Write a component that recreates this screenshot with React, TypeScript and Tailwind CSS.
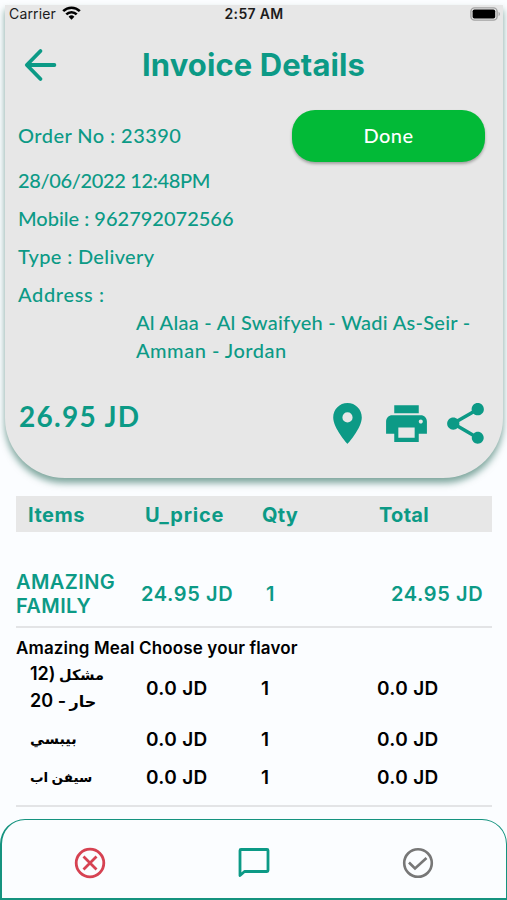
import React from "react";
import { MdLocationOn, MdPrint, MdShare } from "react-icons/md";

type OrderOption = {
    name: React.ReactNode;
    price: string;
    qty: number;
    total: string;
    rowClass: string;
};

const options: OrderOption[] = [
    {
        name: (
            <>
                <span className="text-[14.5px]">مشكل</span> <span className="text-[18px] tracking-[0.4px]">(12</span>
                <br />
                <span className="text-[16px]">حار</span> <span className="text-[18px] tracking-[0.6px]">- 20</span>
            </>
        ),
        price: "0.0 JD",
        qty: 1,
        total: "0.0 JD",
        rowClass: "h-[65px] pt-[2px]",
    },
    { name: <span className="text-[14.5px]">بيبسي</span>, price: "0.0 JD", qty: 1, total: "0.0 JD", rowClass: "h-[38px]" },
    { name: "سيفن اب", price: "0.0 JD", qty: 1, total: "0.0 JD", rowClass: "h-[38px]" },
];

const StatusBar: React.FC = () => (
    <div className="flex h-[18px] items-center pl-[4px] pr-[2px] text-[14px] text-[#1c1c1c]">
        <div className="flex w-[188px] items-center gap-[6px]">
            <span className="-mt-[1px] tracking-[0.15px]">Carrier</span>
            <svg className="-mt-[2px]" width="19" height="14" viewBox="0 0 19 14" fill="none" stroke="#000" strokeWidth="2.6">
                <path d="M1.2 5.1a11.8 11.8 0 0 1 16.6 0" />
                <path d="M4.3 8.4a7.3 7.3 0 0 1 10.4 0" />
                <path d="M9.5 13.8 6.6 10.8a4.1 4.1 0 0 1 5.8 0Z" fill="#000" stroke="none" />
            </svg>
        </div>
        <span className="-mt-[1px] flex-1 text-center font-semibold tracking-[0.3px]">2:57 AM</span>
        <div className="flex w-[190px] justify-end">
            <svg className="-mt-[1px]" width="31" height="14" viewBox="0 0 31 14">
                <rect x="0.9" y="0.9" width="26.2" height="12.2" rx="3.6" fill="none" stroke="#a3a3a3" strokeWidth="1.4" />
                <rect x="2.6" y="2.4" width="22.6" height="9.2" rx="1.8" fill="#000" />
                <path d="M28.6 4.8v4.4c1.8-.8 1.8-3.6 0-4.4Z" fill="#a3a3a3" />
            </svg>
        </div>
    </div>
);

const InvoiceCard: React.FC = () => (
    <section className="ml-[5px] mr-[4px] h-[473px] rounded-b-[60px] bg-[#e7e7e7] text-[#0c9a86] shadow-[0_5px_7px_rgba(0,80,60,0.5)]">
        <StatusBar />
        <div className="flex h-[83px] items-center pl-[19px]">
            <svg width="33" height="34" viewBox="0 0 33 34" fill="none" stroke="currentColor" strokeWidth="3.8" strokeLinecap="round" strokeLinejoin="round">
                <path d="M16.5 3 2.8 17l13.7 14M3.4 17h27" />
            </svg>
            <h1 className="ml-[85px] mt-[1px] whitespace-nowrap text-[31px] font-bold tracking-[0.1px]">Invoice Details</h1>
        </div>
        <div className="flex h-[56px] items-center justify-between pl-[13px] pr-[18px] pt-1 font-[Lato,sans-serif]">
            <span className="pb-[2px] text-[20px] font-medium tracking-[0.45px]">Order No : 23390</span>
            <button className="h-[52px] w-[193px] rounded-[23px] bg-[#02ba37] pb-[2px] text-[20px] font-medium tracking-[0.5px] text-white shadow-[0_2px_3px_rgba(0,0,0,0.3)]">
                Done
            </button>
        </div>
        <div className="-mt-[1px] flex flex-col pl-[13px] font-[Lato,sans-serif] text-[20px] font-medium">
            <p className="h-[38px] leading-[38px] tracking-[-0.35px]">28/06/2022 12:48PM</p>
            <p className="h-[38px] leading-[38px] tracking-[0px]">Mobile : 962792072566</p>
            <p className="h-[38px] leading-[38px] tracking-[0.35px]">Type : Delivery</p>
            <p className="h-[38px] leading-[38px] tracking-[0.65px]">Address :</p>
            <p className="-mt-[5px] ml-[118px] whitespace-nowrap leading-[28px] tracking-[0.27px]">
                Al Alaa - Al Swaifyeh - Wadi As-Seir -
                <br />
                <span className="tracking-[0.5px]">Amman - Jordan</span>
            </p>
        </div>
        <div className="mt-[34px] flex h-[50px] items-center pl-[14px]">
            <span className="mb-[14px] w-[304px] font-[Lato,sans-serif] text-[28px] font-bold tracking-[1.3px]">26.95 JD</span>
            <div className="flex gap-[10px]">
                <MdLocationOn size={49} />
                <MdPrint size={49} />
                <MdShare size={49} />
            </div>
        </div>
    </section>
);

const ItemsTable: React.FC = () => (
    <section className="ml-[16px] mr-[15px] mt-[18px] flex-1 text-black">
        <div className="flex h-[36px] items-center bg-[#e7e7e7] pt-[1px] text-[20px] font-bold text-[#0c9a86]">
            <span className="w-[117px] pl-[12px] tracking-[0.5px]">Items</span>
            <span className="w-[117px] pl-[12px] tracking-[0.75px]">U_price</span>
            <span className="w-[117px] pl-[12px] tracking-[0.2px]">Qty</span>
            <span className="pl-[12px] tracking-[0.3px]">Total</span>
        </div>
        <div className="mt-[35px] flex h-[61px] items-center border-b-2 border-[#e3e4e6] pb-[5px] text-[20px] font-semibold tracking-[0.6px] text-[#0c9a86]">
            <span className="w-[125px] leading-[24px] tracking-[0.4px]">AMAZING FAMILY</span>
            <span className="w-[125px]">24.95 JD</span>
            <span className="w-[125px]">1</span>
            <span className="whitespace-nowrap">24.95 JD</span>
        </div>
        <div className="border-b-2 border-[#e3e4e6] pb-[8px]">
            <h2 className="h-[28px] pt-[8px] text-[17px] font-semibold leading-[24px] tracking-[0.14px]">Amazing Meal Choose your flavor</h2>
            {options.map((option, index) => (
                <div key={index} className={`flex items-center text-[19px] font-semibold tracking-[0.35px] ${option.rowClass}`}>
                    <span
                        dir="rtl"
                        className="w-[130px] whitespace-nowrap pb-[3px] pl-[14px] text-left font-[Inter,'DejaVu_Sans',sans-serif] text-[13.5px] leading-[26px] tracking-normal"
                    >
                        {option.name}
                    </span>
                    <span className="w-[115px]">{option.price}</span>
                    <span className="w-[116px]">{option.qty}</span>
                    <span>{option.total}</span>
                </div>
            ))}
        </div>
    </section>
);

const BottomBar: React.FC = () => (
    <nav className="flex h-[81px] items-center justify-between rounded-t-[25px] border border-b-2 border-l-2 border-[#15937f] px-[72px] pt-[8px]">
        <svg width="32" height="32" viewBox="0 0 32 32" fill="none" stroke="#d64252" strokeWidth="2.8">
            <circle cx="16" cy="16" r="13.8" />
            <path d="M9.5 9.5l13 13M22.5 9.5l-13 13" />
        </svg>
        <svg width="34" height="34" viewBox="0 0 34 34" fill="none" stroke="#0c9a86" strokeWidth="2.8" strokeLinejoin="round">
            <path d="M3 4.5q0-1 1-1h26q1 0 1 1v20q0 1-1 1H7.5L3 29.5Z" />
        </svg>
        <svg width="32" height="32" viewBox="0 0 32 32" fill="none" stroke="#777" strokeWidth="2.6">
            <circle cx="16" cy="16" r="13.8" />
            <path d="M7 15.5l6 6L24.5 11" />
        </svg>
    </nav>
);

export default function App() {
    return (
        <main className="flex h-[900px] w-[507px] flex-col overflow-hidden bg-[#fbfdff] pt-[5px] font-[Inter,sans-serif]">
            <InvoiceCard />
            <ItemsTable />
            <BottomBar />
        </main>
    );
}
